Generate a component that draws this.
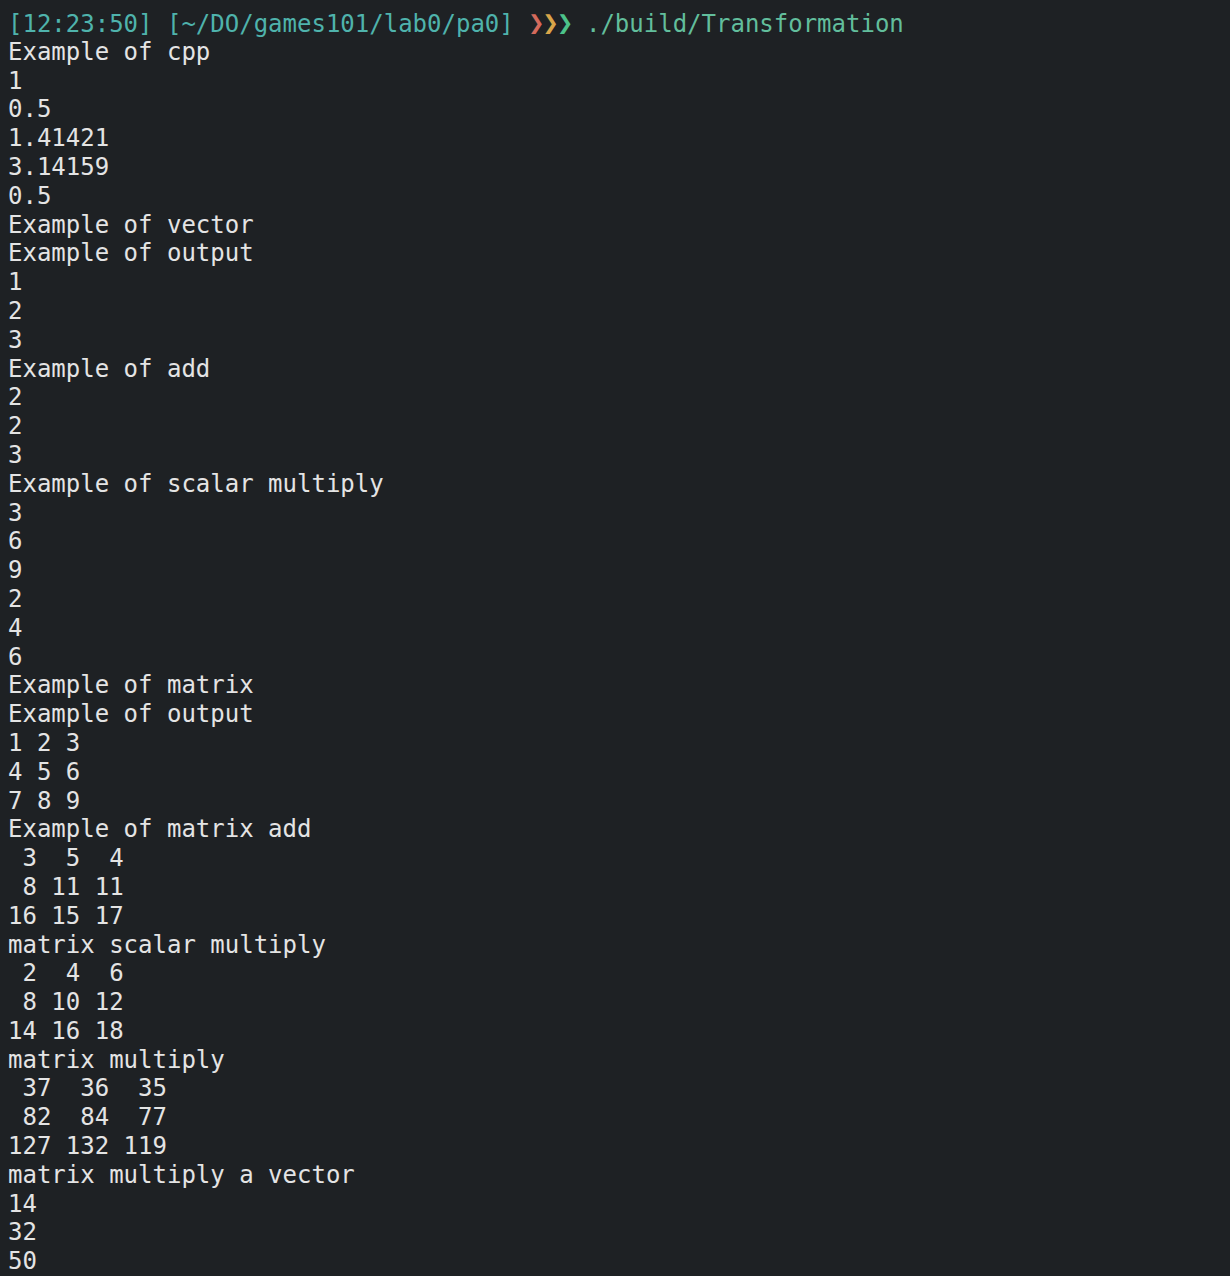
const lines = [
  "Example of cpp",
  "1",
  "0.5",
  "1.41421",
  "3.14159",
  "0.5",
  "Example of vector",
  "Example of output",
  "1",
  "2",
  "3",
  "Example of add",
  "2",
  "2",
  "3",
  "Example of scalar multiply",
  "3",
  "6",
  "9",
  "2",
  "4",
  "6",
  "Example of matrix",
  "Example of output",
  "1 2 3",
  "4 5 6",
  "7 8 9",
  "Example of matrix add",
  " 3  5  4",
  " 8 11 11",
  "16 15 17",
  "matrix scalar multiply",
  " 2  4  6",
  " 8 10 12",
  "14 16 18",
  "matrix multiply",
  " 37  36  35",
  " 82  84  77",
  "127 132 119",
  "matrix multiply a vector",
  "14",
  "32",
  "50",
];

function Chevron({ color }: { color: string }) {
  return (
    <span className={`inline-block w-[14.45px] text-center text-[27px] leading-[28.8px] font-bold ${color}`}>❯</span>
  );
}

export default function App() {
  return (
    <div className="min-h-[1276px] w-[1230px] overflow-hidden bg-[#1e2124] pl-[8px] pt-[9px] font-['DejaVu_Sans_Mono',monospace] text-[24px] leading-[28.8px] text-[#e4e4e4]">
      <div className="h-[28.8px] whitespace-pre">
        <span className="text-[#4fb3ac]">[12:23:50] [~/DO/games101/lab0/pa0] </span>
        <Chevron color="text-[#d46a5c]" />
        <Chevron color="text-[#d9a54a]" />
        <Chevron color="text-[#4cc38a]" />
        <span className="text-[#62be9c]"> ./build/Transformation</span>
      </div>
      {lines.map((l, i) => (
        <div key={i} className="whitespace-pre">
          {l}
        </div>
      ))}
    </div>
  );
}
